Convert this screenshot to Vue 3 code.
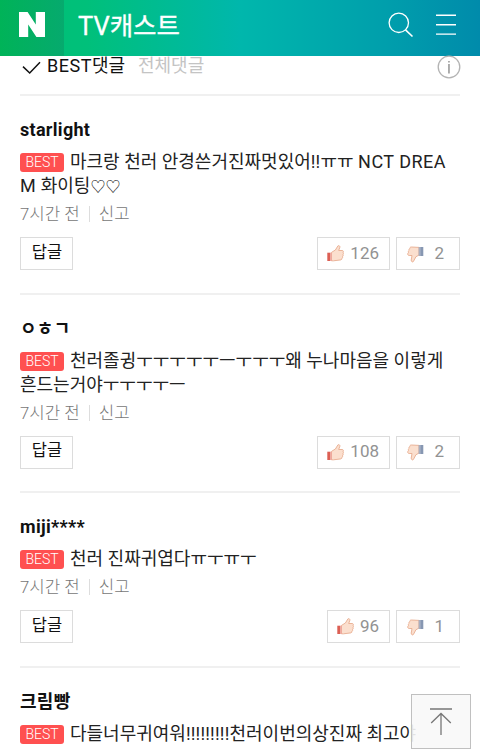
<script setup>
const comments = [
    { id: 1, name: "starlight", text: "마크랑 천러 안경쓴거진짜멋있어!!ㅠㅠ NCT DREAM 화이팅♡♡", up: 126, down: 2 },
    { id: 2, name: "ㅇㅎㄱ", text: "천러졸귕ㅜㅜㅜㅜㅜㅡㅜㅜㅜ왜 누나마음을 이렇게 흔드는거야ㅜㅜㅜㅜㅡ", up: 108, down: 2 },
    { id: 3, name: "miji****", text: "천러 진짜귀엽다ㅠㅜㅠㅜ", up: 96, down: 1 },
    { id: 4, name: "크림빵", text: "다들너무귀여워!!!!!!!!!천러이번의상진짜 최고야", up: 90, down: 1 },
]

// latin words and symbols are sized apart from hangul
const split = (text) => text.split(/([A-Z]+(?: [A-Z]+)*|!+|♡+)/).filter(Boolean)
const partClass = (part) => ({
    latin: /^[A-Z]/.test(part),
    mark: part[0] === "!",
    heart: part[0] === "♡",
})
</script>

<template>
    <div class="page">
        <header class="header">
            <a class="logo">
                <svg width="26" height="25" viewBox="0 0 26 25"><path d="M0 0h8.6l8.2 12.4V0H26v25h-8.6L9.2 12.6V25H0z" fill="#fff" /></svg>
            </a>
            <h1 class="title">TV캐스트</h1>
            <svg class="search" width="26" height="26" viewBox="0 0 26 26" fill="none" stroke="#fff" stroke-width="1.3">
                <circle cx="10.8" cy="10.8" r="9.7" />
                <path d="M17.5 17.8l7 6.7" stroke-width="1.6" />
            </svg>
            <svg class="menu" width="20" height="22" viewBox="0 0 20 22" stroke="#fff" stroke-width="1.4">
                <path d="M0 1.3h20M0 10.7h20M0 20.1h20" />
            </svg>
        </header>

        <nav class="tabs">
            <svg class="check" width="19" height="14" viewBox="0 0 19 14" fill="none" stroke="#111" stroke-width="1.5">
                <path d="M1 5.6l6.7 6.4L18 1.2" />
            </svg>
            <span class="tab on"><span class="latin">BEST</span>댓글</span>
            <span class="tab">전체댓글</span>
            <svg class="info" width="24" height="24" viewBox="0 0 24 24">
                <circle cx="12" cy="12" r="10.8" fill="none" stroke="#b3b3b3" stroke-width="1.3" />
                <path d="M11 5.9h1.9v1.6H11zM11 9h1.9v9.6H11z" fill="#aaa" />
            </svg>
        </nav>

        <ul class="list">
            <li v-for="item in comments" :key="item.id" class="item">
                <strong class="name">{{ item.name }}</strong>
                <p class="text"><em class="best">BEST</em><span v-for="(part, i) in split(item.text)" :key="i" :class="partClass(part)">{{ part }}</span></p>
                <div class="meta"><span>7시간 전</span><span class="report">신고</span></div>
                <div class="actions">
                    <button class="btn reply">답글</button>
                    <button class="btn up">
                        <svg width="17" height="17" viewBox="0 0 17 17">
                            <path d="M4.5 7.4L8.4 5 10.9.9c.9-.7 2.2.1 2 1.3L11.7 5.5h3.5c1.2 0 1.5 1.2.9 1.9.5.7.4 1.6-.1 2 .4.8.2 1.6-.4 2 .3.8 0 1.5-.6 1.8.1.9-.4 1.5-1.2 1.7L6.5 15.8H4.5z" fill="#fbdfce" stroke="#e8ad90" stroke-width=".9" />
                            <path d="M.3 7.7h3.2v8.3H.3z" fill="#dc5f54" />
                            <path d="M3.5 7.7h1.4v8.3H3.5z" fill="#efa99b" />
                        </svg>
                        <span>{{ item.up }}</span>
                    </button>
                    <button class="btn down">
                        <svg width="17" height="17" viewBox="0 0 17 17">
                            <path d="M12 1.4L4.4 1C3 1 2.6 2 2.8 2.8c-1 .3-1.2 1.2-.8 1.9-.8.5-.9 1.3-.5 2C.5 7.3.5 8 .8 8.6c.2.6.8.9 1.4.9H5L4.2 14c-.1 1.7 1.4 2.5 2.2 1.5l2.5-4.7L12 9z" fill="#fbdfce" stroke="#e8ad90" stroke-width=".9" />
                            <path d="M11.6 1h1.6v9h-1.6z" fill="#a9afc0" />
                            <path d="M13.2 1h3.1v9h-3.1z" fill="#8797b2" />
                        </svg>
                        <span>{{ item.down }}</span>
                    </button>
                </div>
            </li>
        </ul>

        <button class="top">
            <svg width="22" height="28" viewBox="0 0 22 28" fill="none" stroke="#777" stroke-width="1.3">
                <path d="M0 1h22M11 5.5V27M1.2 15L11 5.5l9.8 9.5" />
            </svg>
        </button>
    </div>
</template>

<style>
body {
    margin: 0;
    background: #fff;
}
</style>

<style scoped>
.page {
    position: relative;
    width: 480px;
    height: 752px;
    overflow: hidden;
    font-family: Roboto, "Noto Sans CJK KR", sans-serif;
    color: #222;
}

.header {
    display: flex;
    align-items: center;
    height: 56px;
    box-sizing: border-box;
    padding-right: 24px;
    background: linear-gradient(90deg, #00c073 0%, #00c07a 18%, #00b7ac 50%, #009fac 80%, #008bab 100%);
}

.logo {
    width: 64px;
    height: 56px;
    box-sizing: border-box;
    padding: 12px 0 0 19px;
    background: linear-gradient(90deg, #00b358, #06aa6e);
}

.title {
    flex: 1;
    margin: 0 0 5px 14px;
    font-size: 25.5px;
    font-weight: 400;
    line-height: 36px;
    color: #fff;
    -webkit-text-stroke: 0.3px #fff;
}

.search {
    margin: -6px 22px 0 0;
}

.menu {
    margin-top: -7px;
}

.latin {
    letter-spacing: 0.5px;
}

.mark {
    letter-spacing: 0.2px;
}

.heart {
    font-size: 15px;
    line-height: 1;
}

.tabs {
    display: flex;
    height: 38px;
    margin: 0 20px;
    font-size: 18px;
    line-height: 24px;
}

.check {
    margin: 5px 6px 0 2px;
}

.tab {
    margin: -2px 13px 0 0;
    color: #c4c4c4;
}

.tab.on {
    color: #111;
}

.info {
    margin: -1px -1px 0 auto;
}

.list {
    margin: 0;
    padding: 0 20px;
    list-style: none;
}

.item {
    border-top: 2px solid #f0f0f0;
    padding: 22px 0 22.6px;
}

.name {
    display: block;
    font-size: 18px;
    font-weight: 700;
    letter-spacing: 0.3px;
    line-height: 24px;
    color: #111;
}

.text {
    margin: 8px 0 0;
    font-size: 18px;
    line-height: 24px;
    word-break: break-all;
}

.best {
    display: inline-block;
    width: 44px;
    height: 19px;
    margin-right: 6px;
    border-radius: 3px;
    background: #ff5050;
    font-size: 14px;
    font-style: normal;
    font-weight: 300;
    line-height: 19px;
    text-align: center;
    vertical-align: 1px;
    color: #fff;
}

.meta {
    display: flex;
    align-items: center;
    margin-top: 4px;
    font-size: 16.8px;
    font-weight: 300;
    line-height: 24px;
    color: #777;
}

.report {
    display: flex;
    align-items: center;
}

.report::before {
    content: "";
    width: 1px;
    height: 16px;
    margin: 0 9px;
    background: #ddd;
}

.actions {
    display: flex;
    gap: 6px;
    margin-top: 11px;
}

.btn {
    display: flex;
    align-items: center;
    justify-content: center;
    height: 33px;
    box-sizing: border-box;
    padding: 0 0 2px;
    border: 1px solid #dcdcdc;
    background: #fff;
    font-family: inherit;
    font-size: 17px;
    line-height: 24px;
    color: #929292;
}

.reply {
    width: 53px;
    margin-right: auto;
    padding-left: 1px;
    font-size: 16.5px;
    color: #111;
}

.up {
    padding: 0 10px 2px 9px;
    gap: 6px;
}

.up svg {
    margin-top: 2px;
}

.down {
    width: 64px;
    padding-left: 10px;
    padding-right: 15px;
    justify-content: space-between;
}

.down svg {
    margin-top: 3px;
}

.top {
    position: absolute;
    right: 9px;
    bottom: 3px;
    display: flex;
    align-items: center;
    justify-content: center;
    width: 60px;
    height: 55px;
    padding: 0;
    border: 1px solid #c0c0c0;
    background: rgba(248, 248, 248, 0.9);
}
</style>
